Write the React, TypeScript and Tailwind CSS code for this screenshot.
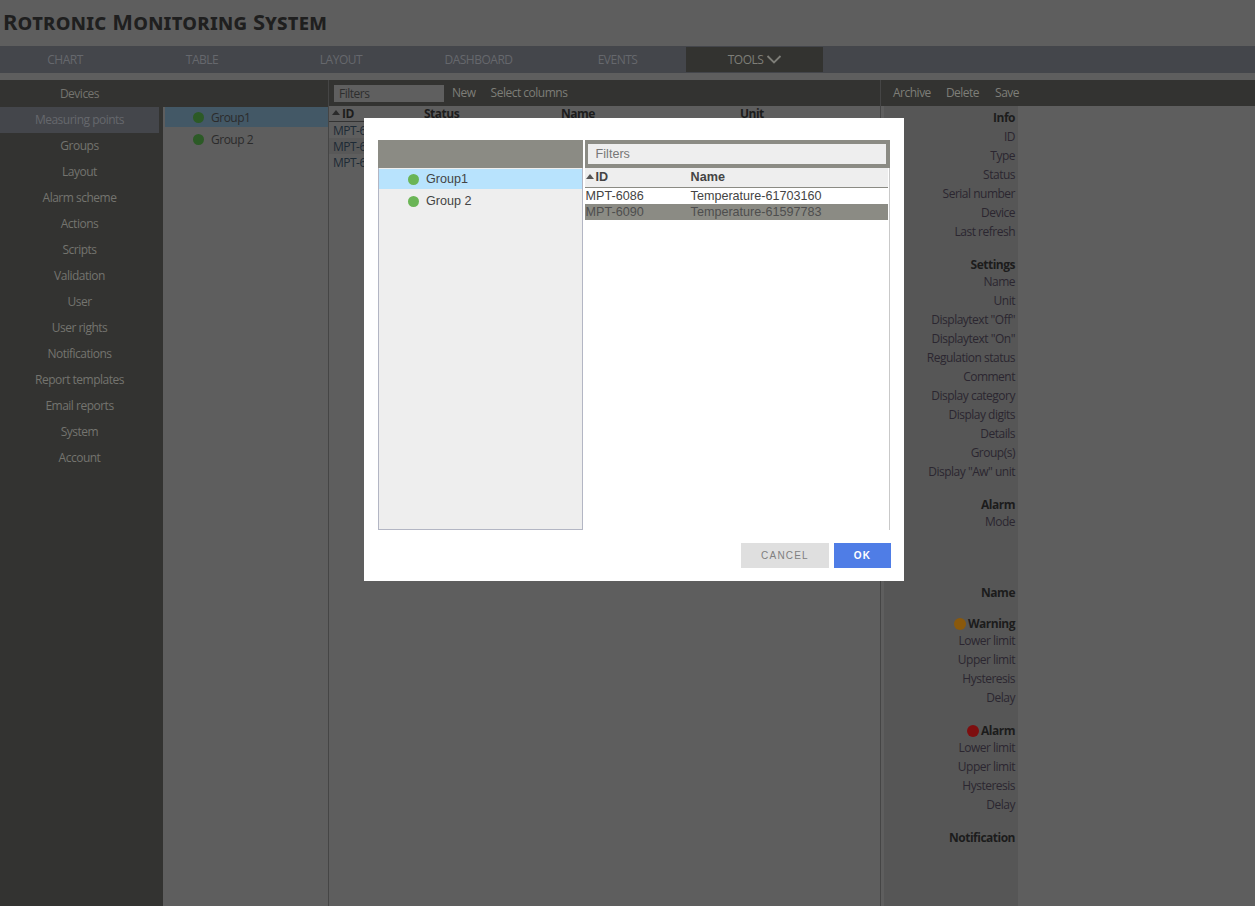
import React from "react";

const sideItems = ["Devices","Measuring points","Groups","Layout","Alarm scheme","Actions","Scripts","Validation","User","User rights","Notifications","Report templates","Email reports","System","Account"];

function Label({ children, bold, h = "h-[19px]", dot }: { children: React.ReactNode; bold?: boolean; h?: string; dot?: string }) {
  return (
    <div className={`${h} flex items-center justify-end gap-[2px] pr-[3px] ${bold ? "font-bold text-[#1c1c1c]" : "text-[#2b2630]"}`}>
      {dot && <span className={`w-[12px] h-[12px] rounded-full ${dot}`} />}
      {children}
    </div>
  );
}

function SortUp({ dim }: { dim?: boolean }) {
  return <span className={`w-0 h-0 shrink-0 border-x-[4px] border-x-transparent border-b-[5px] mr-[2px] mb-[3px] ${dim ? "border-b-[#2a2a2a]" : "border-b-[#555]"}`} />;
}

export default function App() {
  return (
    <div className="relative w-[1255px] h-[906px] overflow-hidden bg-[#5e5e5e] text-[12px] font-['Open_Sans','Noto_Sans',sans-serif] tracking-[-0.5px]">
      <div className="h-[46px] flex items-center pl-[3px] pb-[4px] text-[22px] leading-none font-bold text-[#1f1f1f] font-['Noto_Sans',sans-serif] tracking-[0.24px] [font-variant:small-caps]">
        Rotronic Monitoring System
      </div>
      <div className="h-[27px] flex bg-[#44464b] text-[#66686d]">
        <div className="w-[130px] flex items-center justify-center">CHART</div>
        <div className="w-[144px] flex items-center justify-center">TABLE</div>
        <div className="w-[134px] flex items-center justify-center">LAYOUT</div>
        <div className="w-[141px] flex items-center justify-center">DASHBOARD</div>
        <div className="w-[137px] flex items-center justify-center">EVENTS</div>
        <div className="w-[137px] mt-[1px] h-[25px] bg-[#333330] text-[#7e7e78] flex items-center justify-center gap-[3px] pl-[1px]">
          TOOLS
          <svg width="16" height="9" viewBox="0 0 16 9" fill="none" stroke="#7e7e78" strokeWidth="1.8"><path d="M1.5 1l6.5 6.5L14.5 1" /></svg>
        </div>
      </div>
      <div className="mt-[7px] h-[826px] flex">
        <div className="w-[159px] bg-[#333331] text-[#74746f] pt-[1px]">
          {sideItems.map((s, i) => (
            <div key={s} className={`h-[26px] flex items-center justify-center ${i === 1 ? "bg-[#44464b] text-[#66686d]" : ""}`}>{s}</div>
          ))}
        </div>
        <div className="w-[3px] bg-[#333331]" />
        <div className="w-px bg-[#333331] mr-px" />
        <div className="w-[165px] flex flex-col border-r border-[#454545]">
          <div className="h-[27px] bg-[#333331] -ml-px" />
          <div className="h-[20px] ml-px pl-[28px] flex items-center gap-[7px] bg-[#435866] text-[#2b2b2b] pt-[1px]">
            <span className="w-[11px] h-[11px] rounded-full bg-[#2c5a26]" />Group1
          </div>
          <div className="mt-[2px] h-[20px] pl-[29px] flex items-center gap-[7px] text-[#2b2b2b] pt-[1px]">
            <span className="w-[11px] h-[11px] rounded-full bg-[#2c5a26]" />Group 2
          </div>
        </div>
        <div className="w-[552px] flex flex-col border-r border-[#454545]">
          <div className="h-[26px] bg-[#333331] flex items-center pl-[5px] text-[#7e7e78]">
            <div className="w-[110px] h-[17px] bg-[#5f5f5f] flex items-center pl-[5px] pt-[2px] text-[#2e2e2e]">Filters</div>
            <span className="ml-[8px]">New</span>
            <span className="ml-[15px]">Select columns</span>
          </div>
          <div className="h-[16px] flex items-center font-bold text-[#1c1c1c] border-b border-[#333] pl-[3px]">
            <SortUp dim /><span className="w-[82px]">ID</span><span className="w-[137px]">Status</span><span className="w-[179px]">Name</span><span>Unit</span>
          </div>
          <div className="pl-[4px] text-[#1d2a35]">
            <div className="h-[16px]">MPT-6086</div>
            <div className="h-[16px] bg-[#585858] -ml-[4px] pl-[4px]">MPT-6090</div>
            <div className="h-[16px]">MPT-6094</div>
          </div>
        </div>
        <div className="flex-1 flex flex-col">
          <div className="h-[26px] bg-[#333331] flex items-center pl-[12px] gap-[15px] text-[#7e7e78]">
            <span>Archive</span><span>Delete</span><span className="ml-px">Save</span>
          </div>
          <div className="ml-[3px] w-[134px] flex-1 bg-[#565656] pt-[2px]">
            <Label bold>Info</Label>
            <Label>ID</Label><Label>Type</Label><Label>Status</Label><Label>Serial number</Label><Label>Device</Label><Label>Last refresh</Label>
            <div className="h-[16px]" />
            <Label bold h="h-[15px]">Settings</Label>
            <Label>Name</Label><Label>Unit</Label><Label>Displaytext "Off"</Label><Label>Displaytext "On"</Label><Label>Regulation status</Label><Label>Comment</Label><Label>Display category</Label><Label>Display digits</Label><Label>Details</Label><Label>Group(s)</Label><Label>Display "Aw" unit</Label>
            <div className="h-[16px]" />
            <Label bold h="h-[15px]">Alarm</Label>
            <Label>Mode</Label>
            <div className="h-[52px]" />
            <Label bold>Name</Label>
            <div className="h-[14px]" />
            <Label bold h="h-[15px]" dot="bg-[#8a590c]">Warning</Label>
            <Label>Lower limit</Label><Label>Upper limit</Label><Label>Hysteresis</Label><Label>Delay</Label>
            <div className="h-[16px]" />
            <Label bold h="h-[15px]" dot="bg-[#7e0e0f]">Alarm</Label>
            <Label>Lower limit</Label><Label>Upper limit</Label><Label>Hysteresis</Label><Label>Delay</Label>
            <div className="h-[14px]" />
            <Label bold>Notification</Label>
          </div>
        </div>
      </div>

      <div className="absolute left-[364px] top-[118px] w-[540px] h-[463px] bg-white pt-[22px] pl-[14px] pr-[14px] font-['Liberation_Sans',sans-serif] text-[12.6px] tracking-normal text-[#444]">
        <div className="flex h-[390px]">
          <div className="w-[205px] flex flex-col">
            <div className="h-[28px] bg-[#8b8b84]" />
            <div className="flex-1 bg-[#eeeeee] border border-t-0 border-[#b3b6c4]">
              <div className="h-[20px] mt-[1px] bg-[#b8e3fd] flex items-center pl-[29px] gap-[7px]">
                <span className="w-[11px] h-[11px] rounded-full bg-[#6ab556]" />Group1
              </div>
              <div className="h-[20px] mt-[2px] flex items-center pl-[29px] gap-[7px]">
                <span className="w-[11px] h-[11px] rounded-full bg-[#6ab556]" />Group 2
              </div>
            </div>
          </div>
          <div className="w-[306px] ml-[2px] flex flex-col">
            <div className="h-[28px] bg-[#8b8b84] flex items-center pl-[3px] pr-[4px]">
              <div className="w-full h-[20px] bg-[#eeeeee] flex items-center pl-[8px] text-[#777]">Filters</div>
            </div>
            <div className="flex-1 border-r border-[#c9c9c9] flex flex-col pr-px">
              <div className="h-[20px] bg-[#eeeeee] border-b border-[#8b8b84] flex items-center font-bold pl-[1px]">
                <SortUp /><span className="w-[95px]">ID</span><span>Name</span>
              </div>
              <div className="h-[16px] flex items-center pl-[1px] leading-none"><span className="w-[105px]">MPT-6086</span><span>Temperature-61703160</span></div>
              <div className="h-[16px] flex items-center pl-[1px] leading-none bg-[#8b8b84] text-[#4e4e4e]"><span className="w-[105px]">MPT-6090</span><span>Temperature-61597783</span></div>
            </div>
          </div>
        </div>
        <div className="flex justify-end gap-[5px] mt-[13px] text-[10px] tracking-[1.2px] -mr-[1px]">
          <div className="w-[88px] h-[25px] bg-[#dfdfdf] text-[#808080] flex items-center justify-center">CANCEL</div>
          <div className="w-[57px] h-[25px] bg-[#4f7de6] text-white font-bold flex items-center justify-center">OK</div>
        </div>
      </div>
    </div>
  );
}
